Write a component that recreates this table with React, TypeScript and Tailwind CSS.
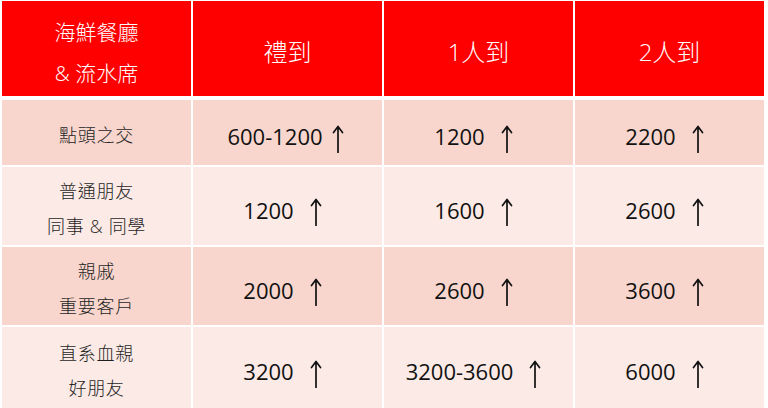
const CJK = "font-['Open_Sans','Noto_Sans_CJK_TC',sans-serif]";

type Row = { label: string[]; cells: { num: string; tight?: boolean }[]; tone: "dark" | "light"; h: string };

const rows: Row[] = [
  { label: ["點頭之交"], cells: [{ num: "600-1200", tight: true }, { num: "1200" }, { num: "2200" }], tone: "dark", h: "h-[65px]" },
  { label: ["普通朋友", "同事 & 同學"], cells: [{ num: "1200" }, { num: "1600" }, { num: "2600" }], tone: "light", h: "h-[78px]" },
  { label: ["親戚", "重要客戶"], cells: [{ num: "2000" }, { num: "2600" }, { num: "3600" }], tone: "dark", h: "h-[78px]" },
  { label: ["直系血親", "好朋友"], cells: [{ num: "3200" }, { num: "3200-3600" }, { num: "6000" }], tone: "light", h: "h-[81px]" },
];

function Arrow() {
  return (
    <svg width="12" height="28" viewBox="0 0 12 28" className="shrink-0 translate-y-[2px]">
      <path d="M6 1.5V27.5M1.5 7.5L6 1.5L10.5 7.5" fill="none" stroke="#111" strokeWidth="1.7" strokeLinecap="round" strokeLinejoin="round" />
    </svg>
  );
}

export default function App() {
  return (
    <div className={`w-[768px] h-[408px] overflow-hidden bg-white pl-[2px] pr-[4px] pt-[1px] ${CJK}`}>
      <div className="grid grid-cols-4 gap-x-[2px]">
        <div className="h-[95px] bg-[#ff0000] text-white text-[21px] font-light leading-[41px] flex flex-col items-center justify-center pt-[8px]">
          <span>海鮮餐廳</span>
          <span>&amp; 流水席</span>
        </div>
        {["禮到", "1人到", "2人到"].map((t) => (
          <div key={t} className="h-[95px] bg-[#ff0000] text-white text-[24px] font-light flex items-center justify-center pt-[6px]">
            {t}
          </div>
        ))}
      </div>
      <div className="mt-[4px] flex flex-col gap-y-[2px]">
        {rows.map((r, i) => {
          const bg = r.tone === "dark" ? "bg-[#f8d6cd]" : "bg-[#fbeae6]";
          return (
            <div key={i} className="grid grid-cols-4 gap-x-[2px]">
              <div className={`${r.h} ${bg} flex flex-col items-center justify-center text-[18px] font-light tracking-[0.7px] leading-[35px] text-[#1f1f1f] pt-[6px]`}>
                {r.label.map((l) => (
                  <span key={l}>{l}</span>
                ))}
              </div>
              {r.cells.map((c, j) => (
                <div key={j} className={`${r.h} ${bg} flex items-center justify-center text-[22px] text-[#111] pt-[8px] ${c.tight ? "pr-[4px]" : "pr-[10px]"}`}>
                  <span>{c.num}</span>
                  <span className={c.tight ? "ml-[9px]" : "ml-[16px]"}>
                    <Arrow />
                  </span>
                </div>
              ))}
            </div>
          );
        })}
      </div>
    </div>
  );
}
